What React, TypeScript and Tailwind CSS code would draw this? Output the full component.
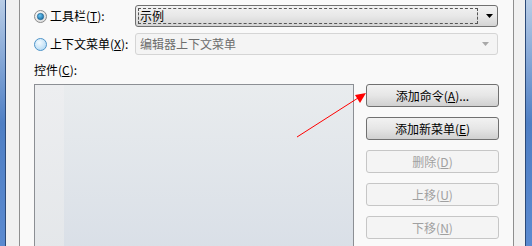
import React from "react";

const font = { fontFamily: '"Noto Sans CJK SC", "Noto Sans", sans-serif' };

const Radio = ({ checked }: { checked: boolean }) => (
  <svg width="13" height="13" viewBox="0 0 13 13">
    <defs>
      <radialGradient id="rOn" cx="0.4" cy="0.35" r="0.8">
        <stop offset="0" stopColor="#ffffff" />
        <stop offset="1" stopColor="#d6d6d6" />
      </radialGradient>
      <radialGradient id="rOff" cx="0.4" cy="0.35" r="0.8">
        <stop offset="0" stopColor="#f4fbff" />
        <stop offset="1" stopColor="#a9d4f2" />
      </radialGradient>
      <radialGradient id="dot" cx="0.4" cy="0.35" r="0.8">
        <stop offset="0" stopColor="#6ac6f4" />
        <stop offset="1" stopColor="#0b5c94" />
      </radialGradient>
    </defs>
    {checked ? (
      <>
        <circle cx="6.5" cy="6.5" r="6" fill="url(#rOn)" stroke="#8c8c8c" />
        <circle cx="6.5" cy="6.5" r="3.2" fill="url(#dot)" stroke="#1d5f8a" strokeWidth="0.6" />
      </>
    ) : (
      <circle cx="6.5" cy="6.5" r="6" fill="url(#rOff)" stroke="#4f94c8" />
    )}
  </svg>
);

const Btn = ({ children, disabled }: { children: React.ReactNode; disabled?: boolean }) => (
  <div
    className={
      disabled
        ? "flex h-[23px] w-[133px] items-center justify-center rounded-[3px] border border-[#c6c6c6] bg-[#f4f4f4] text-[12px] text-[#a0a0a0]"
        : "flex h-[23px] w-[133px] items-center justify-center rounded-[3px] border border-[#707070] bg-gradient-to-b from-[#f2f2f2] via-[#e6e6e6] to-[#d0d0d0] text-[12px] text-black"
    }
  >
    {children}
  </div>
);

export default function App() {
  return (
    <div className="relative flex h-[246px] w-[532px] overflow-hidden bg-[#f0f0f0] leading-none" style={font}>
      {/* left window frame */}
      <div className="w-[5px] bg-gradient-to-b from-[#b9cde6] via-[#4f7fc4] to-[#5b8ad0]" />
      <div className="w-px bg-[#2c4a78]" />
      <div className="w-[13px] bg-[#f0f0f0]" />
      <div className="w-px bg-[#8e8e8e]" />

      {/* content */}
      <div className="flex w-[493px] flex-col bg-[#f9f9f9] pl-[14px] pt-[5px]">
        <div className="flex h-[22px] items-center">
          <div className="flex w-[101px] items-center gap-[3px]">
            <Radio checked />
            <span className="text-[12px] text-black">
              工具栏(<span className="underline">T</span>):
            </span>
          </div>
          <div className="relative flex h-[22px] w-[363px] items-center rounded-[3px] border border-[#707070] bg-gradient-to-b from-[#f2f2f2] via-[#e8e8e8] to-[#d4d4d4]">
            <div className="ml-[2px] flex h-[16px] w-[340px] items-center border border-dashed border-[#555] pl-[1px] text-[12px] text-black">
              示例
            </div>
            <svg className="ml-[8px]" width="7" height="4" viewBox="0 0 7 4">
              <path d="M0 0h7L3.5 4z" fill="#000" />
            </svg>
          </div>
        </div>

        <div className="mt-[6px] flex h-[22px] items-center">
          <div className="flex w-[101px] items-center gap-[3px]">
            <Radio checked={false} />
            <span className="text-[12px] text-black">
              上下文菜单(<span className="underline">X</span>):
            </span>
          </div>
          <div className="flex h-[22px] w-[363px] items-center justify-between rounded-[3px] border border-[#d5d5d5] bg-[#f4f4f4] pl-[4px] pr-[8px]">
            <span className="text-[12px] text-[#6d6d6d]">编辑器上下文菜单</span>
            <svg width="7" height="4" viewBox="0 0 7 4">
              <path d="M0 0h7L3.5 4z" fill="#a8a8a8" />
            </svg>
          </div>
        </div>

        <div className="mt-[9px] text-[12px] text-black">
          控件(<span className="underline">C</span>):
        </div>

        <div className="mt-[8px] flex gap-[12px]">
          <div className="flex h-[170px] w-[320px] border border-[#8c8f94]">
            <div className="w-[29px] bg-gradient-to-b from-[#edeef0] to-[#e4e7ea]" />
            <div className="flex-1 bg-gradient-to-b from-[#e9ecee] to-[#d9dfe7]" />
          </div>
          <div className="flex flex-col gap-[10px]">
            <Btn>
              添加命令(<span className="underline">A</span>)...
            </Btn>
            <Btn>
              添加新菜单(<span className="underline">E</span>)
            </Btn>
            <Btn disabled>
              删除(<span className="underline">D</span>)
            </Btn>
            <Btn disabled>
              上移(<span className="underline">U</span>)
            </Btn>
            <Btn disabled>
              下移(<span className="underline">N</span>)
            </Btn>
          </div>
        </div>
      </div>

      {/* right window frame */}
      <div className="w-px bg-[#8e8e8e]" />
      <div className="w-[11px] bg-[#f0f0f0]" />
      <div className="w-px bg-[#2c4a78]" />
      <div className="flex-1 bg-gradient-to-b from-[#b9cde6] via-[#4f7fc4] to-[#5b8ad0]" />

      {/* red annotation arrow */}
      <svg className="pointer-events-none absolute left-0 top-0" width="532" height="246" viewBox="0 0 532 246">
        <line x1="297" y1="137" x2="358" y2="98" stroke="#ff0000" strokeWidth="1" />
        <path d="M366 93 L355 95 L360 103 Z" fill="#ff0000" />
      </svg>
    </div>
  );
}
